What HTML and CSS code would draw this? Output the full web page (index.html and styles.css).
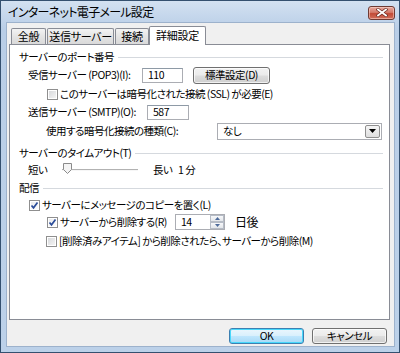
FILE: index.html
```html
<!DOCTYPE html>
<html lang="ja">
<head>
  <meta charset="UTF-8" />
  <title>インターネット電子メール設定</title>
  <link rel="stylesheet" href="styles.css">
</head>
<body>
  <div class="window">
    <div class="titlebar">
      <span class="title">インターネット電子メール設定</span>
      <span class="close-btn">
        <svg width="12" height="9" viewBox="0 0 12 9">
          <path d="M2 1.5 L10 7.5 M10 1.5 L2 7.5" stroke="#6b2a22" stroke-width="3.2" stroke-linecap="square"/>
          <path d="M2 1.5 L10 7.5 M10 1.5 L2 7.5" stroke="#ffffff" stroke-width="1.8" stroke-linecap="square"/>
        </svg>
      </span>
    </div>

    <div class="client">
      <div class="tabs">
        <span class="tab tab-1">全般</span>
        <span class="tab tab-2">送信サーバー</span>
        <span class="tab tab-3">接続</span>
        <span class="tab active">詳細設定</span>
      </div>

      <div class="panel">
        <div class="group-head g1"><span>サーバーのポート番号</span><span class="rule"></span></div>

        <div class="row r1">
          <span class="label pop-label">受信サーバー (POP3)(I):</span>
          <span class="textbox pop-box">110</span>
          <span class="btn std-btn">標準設定(D)</span>
        </div>
        <div class="row r2 indent-2">
          <span class="cb"></span>
          <span>このサーバーは暗号化された接続 (SSL) が必要(E)</span>
        </div>
        <div class="row r3">
          <span class="label smtp-label">送信サーバー (SMTP)(O):</span>
          <span class="textbox smtp-box">587</span>
        </div>
        <div class="row r4 indent-2b">
          <span class="label enc-label">使用する暗号化接続の種類(C):</span>
          <span class="combo">
            <span class="combo-text">なし</span>
            <span class="combo-arrow">
              <svg width="7" height="4" viewBox="0 0 7 4"><path d="M0 0 H7 L3.5 4 Z" fill="#000"/></svg>
            </span>
          </span>
        </div>

        <div class="group-head g2"><span>サーバーのタイムアウト(T)</span><span class="rule"></span></div>
        <div class="row r5">
          <span class="short-label">短い</span>
          <span class="slider">
            <span class="track"></span>
            <svg class="thumb" width="9" height="11" viewBox="0 0 9 11">
              <path d="M0.5 0.5 H8.5 V6.5 L4.5 10.5 L0.5 6.5 Z" fill="#f4f4f4" stroke="#8a8a8a"/>
            </svg>
          </span>
          <span class="long-label">長い</span>
          <span class="minutes">1 分</span>
        </div>

        <div class="group-head g3"><span>配信</span><span class="rule"></span></div>
        <div class="row r6 indent-1">
          <span class="cb checked">
            <svg width="9" height="9" viewBox="0 0 9 9"><path d="M1.5 4.5 L3.5 6.8 L7.5 1.5" fill="none" stroke="#2a4c99" stroke-width="1.7"/></svg>
          </span>
          <span>サーバーにメッセージのコピーを置く(L)</span>
        </div>
        <div class="row r7 indent-2">
          <span class="cb checked">
            <svg width="9" height="9" viewBox="0 0 9 9"><path d="M1.5 4.5 L3.5 6.8 L7.5 1.5" fill="none" stroke="#2a4c99" stroke-width="1.7"/></svg>
          </span>
          <span class="del-label">サーバーから削除する(R)</span>
          <span class="spin">
            <span class="spin-text">14</span>
            <span class="spin-btns">
              <span class="spin-btn"><svg width="5" height="3" viewBox="0 0 5 3"><path d="M0 3 L2.5 0 L5 3 Z" fill="#4d6a9a"/></svg></span>
              <span class="spin-btn"><svg width="5" height="3" viewBox="0 0 5 3"><path d="M0 0 L2.5 3 L5 0 Z" fill="#4d6a9a"/></svg></span>
            </span>
          </span>
          <span class="days">日後</span>
        </div>
        <div class="row r8 indent-2b">
          <span class="cb"></span>
          <span>[削除済みアイテム] から削除されたら、サーバーから削除(M)</span>
        </div>
      </div>

      <div class="footer">
        <span class="btn dlg-btn default">OK</span>
        <span class="btn dlg-btn">キャンセル</span>
      </div>
    </div>
  </div>
</body>
</html>
```

FILE: styles.css
```css
* { box-sizing: border-box; margin: 0; padding: 0; }
body {
  width: 400px; height: 353px; overflow: hidden; background: #ffffff;
  font-family: "Noto Sans CJK JP", "Liberation Sans", sans-serif;
  font-size: 10.5px; color: #000; line-height: 1;
  font-feature-settings: "palt"; letter-spacing: -0.5px;
  white-space: nowrap;
}
.window {
  width: 400px; height: 353px; border: 1px solid #34506f;
  background: linear-gradient(#d3e1f1 0%, #b9cee7 8%, #bcd1e9 100%);
  padding: 0 4px 5px 5px;
  display: flex; flex-direction: column;
}
.titlebar {
  height: 21px; display: flex; justify-content: space-between; align-items: center;
  padding-left: 2px;
}
.title { font-size: 12px; letter-spacing: -0.7px; padding-top: 1px; }
.close-btn {
  width: 27px; height: 14px; margin-top: 2px;
  border: 1px solid #6e3a33; border-radius: 3px;
  background: linear-gradient(#e8a99e 0%, #d47a6a 45%, #c24a36 55%, #d2705c 100%);
  display: flex; align-items: center; justify-content: center;
  box-shadow: inset 0 0 0 1px rgba(255, 220, 210, 0.5);
}
.client {
  flex: 1; background: #f0f0f0; border: 1px solid #9db2cc;
  padding: 3px 4px 0 2px;
  display: flex; flex-direction: column;
}
.tabs { display: flex; height: 18px; padding-left: 2px; align-items: flex-end; font-size: 11px; letter-spacing: -0.3px; }
.tab {
  height: 16px; border: 1px solid #898c95; border-bottom: none;
  border-radius: 2px 2px 0 0;
  background: linear-gradient(#f3f3f3, #e4e4e4 50%, #d9d9d9);
  display: flex; align-items: center; justify-content: center;
}
.tab-1 { width: 35px; }
.tab-2 { width: 67px; margin-left: 1px; }
.tab-3 { width: 34px; margin-left: 1px; }
.tab.active {
  width: 57px; height: 19px; margin-bottom: -1px; margin-left: 0;
  background: #ffffff; position: relative; z-index: 1;
  align-items: flex-start; padding-top: 3px;
}
.panel {
  height: 276px; background: #ffffff; border: 1px solid #898c95;
  padding: 5px 6px 0 9px;
  display: flex; flex-direction: column;
}
.group-head { height: 14px; display: flex; align-items: center; gap: 4px; }
.group-head .rule { flex: 1; border-top: 1px solid #d5d9de; }
.g2 { margin-top: 6px; }
.g3 { margin-top: 3px; }
.row { display: flex; align-items: center; padding-left: 9px; }
.row > * { flex-shrink: 0; }
.r1 { height: 19px; margin-top: 2px; }
.r2 { height: 16px; margin-top: 1px; }
.r3 { height: 18px; margin-top: 1px; }
.r4 { height: 18px; margin-top: 1px; }
.r5 { height: 16px; margin-top: 2px; }
.r6 { height: 16px; margin-top: 2px; }
.r7 { height: 18px; }
.r8 { height: 16px; margin-top: 2px; }
.indent-1 { padding-left: 10px; }
.indent-2 { padding-left: 28px; }
.indent-2b { padding-left: 27px; }
.pop-label { width: 114px; }
.smtp-label { width: 119px; }
.enc-label { width: 171px; }
.textbox {
  height: 15px; background: #fff; border: 1px solid #abadb3;
  border-top-color: #8e9aa6; padding-left: 5px;
  display: flex; align-items: center;
}
.pop-box { width: 41px; }
.smtp-box { width: 42px; }
.btn {
  border: 1px solid #707070; border-radius: 3px;
  background: linear-gradient(#f2f2f2 0%, #ebebeb 48%, #dddddd 52%, #cfcfcf 100%);
  box-shadow: inset 0 0 0 1px rgba(255, 255, 255, 0.7);
  display: flex; align-items: center; justify-content: center;
}
.std-btn { width: 77px; height: 17px; margin-left: 10px; }
.cb {
  width: 11px; height: 11px; border: 1px solid #8f8f8f; margin-right: 2px;
  background: linear-gradient(135deg, #d4d6d9, #f7f7f7);
  box-shadow: inset 0 0 0 1px #ffffff;
  display: flex; align-items: center; justify-content: center;
}
.cb.checked { background: linear-gradient(135deg, #e6e8eb, #ffffff); }
.combo {
  width: 165px; height: 17px; background: #fff; border: 1px solid #abadb3;
  display: flex; align-items: center; justify-content: space-between;
  padding: 0 1px 0 5px;
}
.combo-arrow {
  width: 15px; height: 13px; border: 1px solid #8f8f8f; border-radius: 2px;
  background: linear-gradient(#f5f5f5, #dedede);
  display: flex; align-items: center; justify-content: center;
}
.short-label { width: 34px; }
.slider { width: 76px; height: 14px; position: relative; display: flex; align-items: center; }
.track { width: 100%; height: 2px; border-top: 1px solid #b2b2b2; border-bottom: 1px solid #f6f6f6; }
.thumb { position: absolute; left: 1px; top: 0; }
.long-label { margin-left: 15px; width: 25px; }
.del-label { width: 115px; }
.spin {
  width: 50px; height: 16px; background: #fff; border: 1px solid #abadb3;
  display: flex; justify-content: space-between; padding-left: 5px;
}
.spin-text { align-self: center; }
.spin-btns { width: 14px; display: flex; flex-direction: column; }
.spin-btn {
  flex: 1; border: 1px solid #b6bcc6; background: linear-gradient(#f7f8fa, #e3e6ea);
  display: flex; align-items: center; justify-content: center;
}
.days { margin-left: 10px; font-size: 12px; }
.footer {
  display: flex; justify-content: flex-end; gap: 8px;
  padding-right: 3px; margin-top: 8px;
}
.dlg-btn { width: 75px; height: 16px; }
.dlg-btn.default {
  border-color: #3c7fb1;
  background: linear-gradient(#eaf6fd 0%, #d9f0fc 48%, #bee6fd 52%, #a7d9f5 100%);
  box-shadow: inset 0 0 0 1px #48d8fb;
}
```
